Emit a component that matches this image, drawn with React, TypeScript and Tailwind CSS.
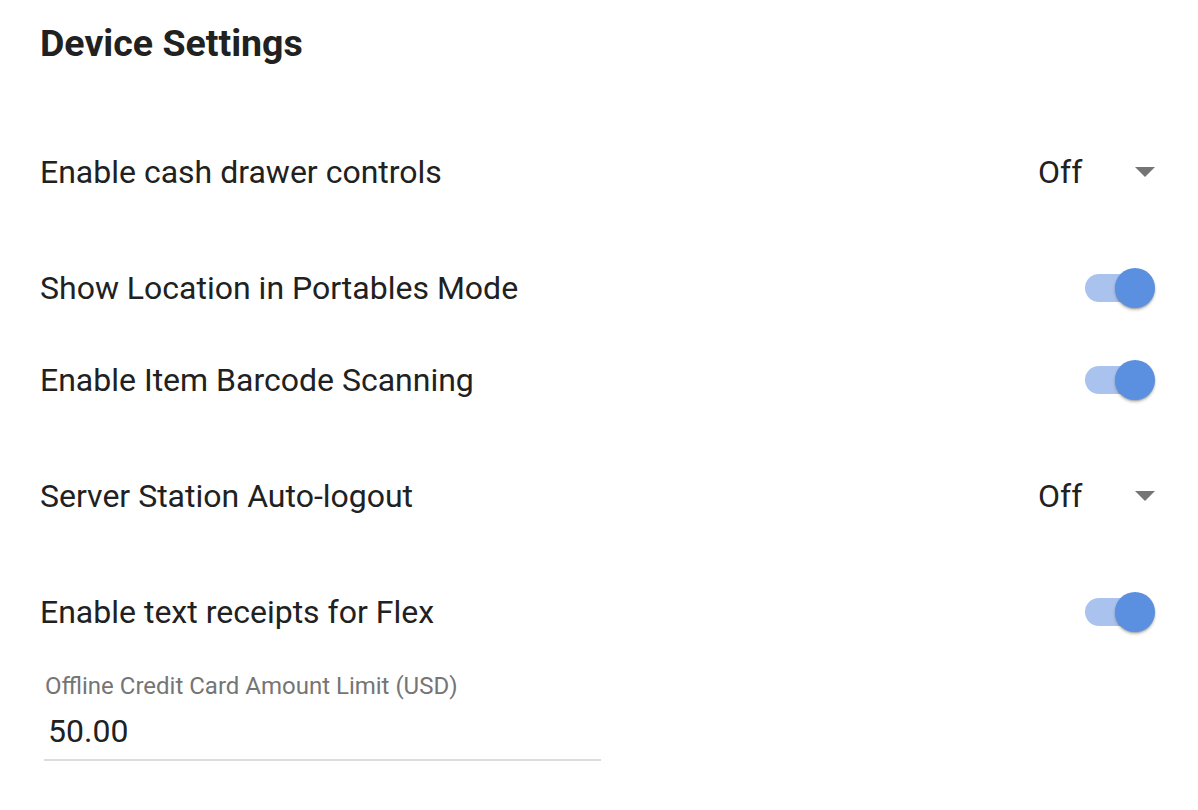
import React from 'react'

const font = { fontFamily: 'Roboto, "Liberation Sans", sans-serif' }

function Toggle() {
  return (
    <div className="relative w-[72px] h-[40px] flex items-center">
      <div className="ml-[2px] w-[68px] h-[28px] rounded-full bg-[#a9c3ee]" />
      <div className="absolute right-0 top-0 w-[40px] h-[40px] rounded-full bg-[#5b8fe0] shadow-[0_2px_3px_rgba(0,0,0,0.25),0_1px_1px_rgba(0,0,0,0.14)]" />
    </div>
  )
}

function Dropdown({ value }: { value: string }) {
  return (
    <div className="flex items-center w-[117px] justify-between">
      <span className="text-[32px] text-[#212121]">{value}</span>
      <svg width="20" height="10" viewBox="0 0 20 10">
        <path d="M0 0 L20 0 L10 10 Z" fill="#757575" />
      </svg>
    </div>
  )
}

function Row({ label, children, tall }: { label: string; children: React.ReactNode; tall?: boolean }) {
  return (
    <div className={`flex items-center justify-between h-[92px] ${tall ? 'my-[24px]' : ''}`}>
      <span className="text-[32px] text-[#212121]">{label}</span>
      {children}
    </div>
  )
}

export default function App() {
  return (
    <div className="bg-white w-[1198px] h-[810px] pl-[40px] pr-[43px]" style={font}>
      <div className="h-[86px] flex items-center">
        <h1 className="text-[37.5px] font-bold text-[#212121]">Device Settings</h1>
      </div>
      <div className="pt-[16px]">
        <Row label="Enable cash drawer controls" tall>
          <Dropdown value="Off" />
        </Row>
        <Row label="Show Location in Portables Mode">
          <Toggle />
        </Row>
        <Row label="Enable Item Barcode Scanning">
          <Toggle />
        </Row>
        <Row label="Server Station Auto-logout" tall>
          <Dropdown value="Off" />
        </Row>
        <Row label="Enable text receipts for Flex">
          <Toggle />
        </Row>
      </div>
      <div className="ml-[4px] w-[557px] mt-[10px]">
        <div className="text-[24px] text-[#757575] pl-[1px] leading-[36px]">Offline Credit Card Amount Limit (USD)</div>
        <div className="text-[32px] text-[#212121] pl-[4px] leading-[42px] mt-[6px] pb-[7px] border-b-2 border-[#dcdcdc]">50.00</div>
      </div>
    </div>
  )
}
